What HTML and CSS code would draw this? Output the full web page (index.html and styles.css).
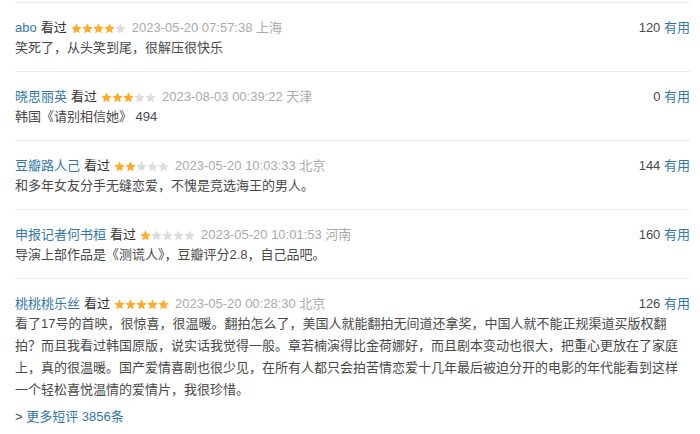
FILE: index.html
```html
<!DOCTYPE html>
<html lang="zh-CN">
<head>
  <meta charset="UTF-8">
  <meta name="viewport" content="width=device-width, initial-scale=1.0">
  <title>短评</title>
  <link rel="stylesheet" href="styles.css">
</head>
<body>
  <svg width="0" height="0" class="defs">
    <symbol id="star" viewBox="0 0 10 10">
      <path d="M5 0.3 L6.41 3.36 L9.76 3.76 L7.28 6.04 L7.94 9.35 L5 7.7 L2.06 9.35 L2.72 6.04 L0.24 3.76 L3.59 3.36 Z"/>
    </symbol>
  </svg>

  <div class="comments">
    <div class="comment-item">
      <div class="comment-info">
        <div class="info-left">
          <a href="#" class="user">abo</a>
          <span class="status">看过</span>
          <span class="rating" data-stars="4"></span>
          <span class="time">2023-05-20 07:57:38 上海</span>
        </div>
        <div class="votes"><span class="count">120</span> <a href="#">有用</a></div>
      </div>
      <p class="short">笑死了，从头笑到尾，很解压很快乐</p>
    </div>

    <div class="comment-item">
      <div class="comment-info">
        <div class="info-left">
          <a href="#" class="user">晓思丽英</a>
          <span class="status">看过</span>
          <span class="rating" data-stars="3"></span>
          <span class="time">2023-08-03 00:39:22 天津</span>
        </div>
        <div class="votes"><span class="count">0</span> <a href="#">有用</a></div>
      </div>
      <p class="short">韩国《请别相信她》 494</p>
    </div>

    <div class="comment-item">
      <div class="comment-info">
        <div class="info-left">
          <a href="#" class="user">豆瓣路人己</a>
          <span class="status">看过</span>
          <span class="rating" data-stars="2"></span>
          <span class="time">2023-05-20 10:03:33 北京</span>
        </div>
        <div class="votes"><span class="count">144</span> <a href="#">有用</a></div>
      </div>
      <p class="short">和多年女友分手无缝恋爱，不愧是竞选海王的男人。</p>
    </div>

    <div class="comment-item">
      <div class="comment-info">
        <div class="info-left">
          <a href="#" class="user">申报记者何书桓</a>
          <span class="status">看过</span>
          <span class="rating" data-stars="1"></span>
          <span class="time">2023-05-20 10:01:53 河南</span>
        </div>
        <div class="votes"><span class="count">160</span> <a href="#">有用</a></div>
      </div>
      <p class="short">导演上部作品是《测谎人》，豆瓣评分2.8，自己品吧。</p>
    </div>

    <div class="comment-item">
      <div class="comment-info">
        <div class="info-left">
          <a href="#" class="user">桃桃桃乐丝</a>
          <span class="status">看过</span>
          <span class="rating" data-stars="5"></span>
          <span class="time">2023-05-20 00:28:30 北京</span>
        </div>
        <div class="votes"><span class="count">126</span> <a href="#">有用</a></div>
      </div>
      <p class="short">看了17号的首映，很惊喜，很温暖。翻拍怎么了，美国人就能翻拍无间道还拿奖，中国人就不能正规渠道买版权翻拍？而且我看过韩国原版，说实话我觉得一般。章若楠演得比金荷娜好，而且剧本变动也很大，把重心更放在了家庭上，真的很温暖。国产爱情喜剧也很少见，在所有人都只会拍苦情恋爱十几年最后被迫分开的电影的年代能看到这样一个轻松喜悦温情的爱情片，我很珍惜。</p>
    </div>

    <p class="more">&gt; <a href="#">更多短评 3856条</a></p>
  </div>

  <script>
    document.querySelectorAll('.rating').forEach(function(el) {
      const n = parseInt(el.dataset.stars, 10);
      let html = '';
      for (let i = 0; i < 5; i++) {
        html += '<svg class="' + (i < n ? 'on' : 'off') + '"><use href="#star"/></svg>';
      }
      el.innerHTML = html;
    });
  </script>
</body>
</html>
```

FILE: styles.css
```css
body {
  margin: 0;
  padding: 0;
  background-color: #ffffff;
  font-family: "Liberation Sans", Arial, "Noto Sans CJK SC", sans-serif;
  font-size: 13px;
  color: #494949;
}
a {
  color: #3377aa;
  text-decoration: none;
}
.defs {
  position: absolute;
}
.comments {
  width: 675px;
  margin: 0 0 0 15px;
  padding-top: 2px;
}
.comment-item {
  border-top: 1px solid #ebebeb;
  padding: 16px 0 12px;
}
.comment-item:last-of-type {
  padding-bottom: 0;
}
.comment-info {
  display: flex;
  justify-content: space-between;
  align-items: center;
  line-height: 18px;
}
.info-left {
  display: flex;
  align-items: center;
}
.status {
  margin-left: 4px;
  color: #333;
}
.rating {
  display: inline-flex;
  margin-left: 4px;
}
.rating svg {
  width: 11px;
  height: 11px;
}
.rating .on {
  fill: #ffac2d;
}
.rating .off {
  fill: #dddddd;
}
.time {
  margin-left: 6px;
  color: #aaaaaa;
}
.votes .count {
  color: #494949;
}
.short {
  margin: 0;
  line-height: 22px;
  color: #494949;
}
.more {
  margin: 5px 0 0;
  line-height: 22px;
  color: #494949;
}
```
